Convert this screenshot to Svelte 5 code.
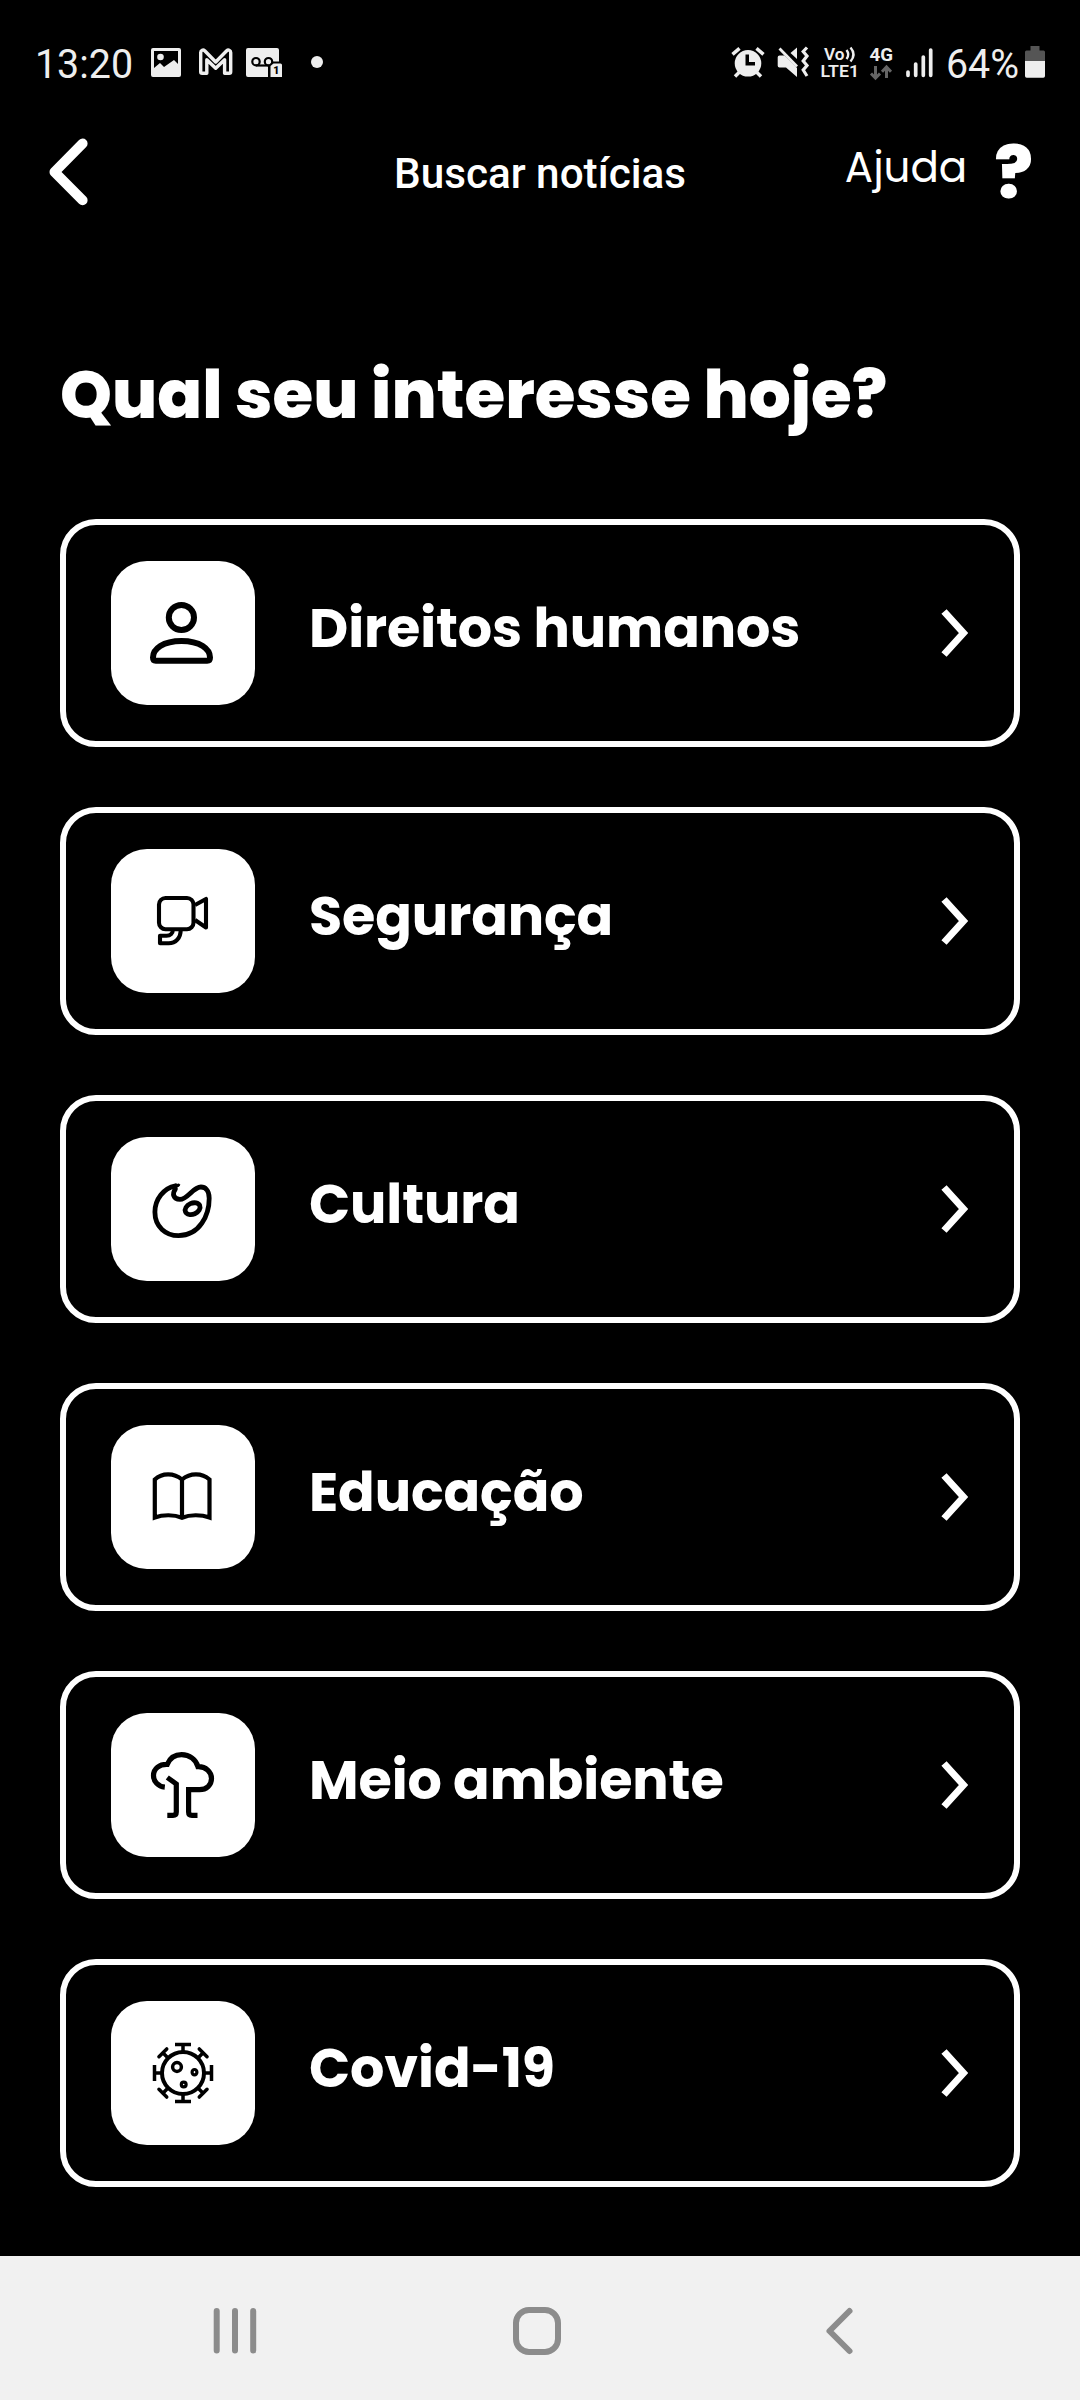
<script>
  const topics = [
    { id: 'person', label: 'Direitos humanos' },
    { id: 'camera', label: 'Segurança' },
    { id: 'palette', label: 'Cultura' },
    { id: 'book', label: 'Educação' },
    { id: 'tree', label: 'Meio ambiente' },
    { id: 'virus', label: 'Covid-19' }
  ];
  const straight = [0, 90, 180, 270];
  const diagonal = [45, 135, 225, 315];
</script>

<div class="screen">
  <header class="status">
    <svg class="clock" width="106" height="56" viewBox="33 34 106 56">
      <text x="35" y="78" font-size="41" textLength="98" lengthAdjust="spacingAndGlyphs">13:20</text>
    </svg>
    <svg class="photo" width="30" height="30" viewBox="151 48 30 30">
      <path fill-rule="evenodd" d="M153 48h26a2 2 0 0 1 2 2v25a2 2 0 0 1-2 2h-26a2 2 0 0 1-2-2V50a2 2 0 0 1 2-2zM154 51v17l6-5 4 4 10-7 4 4V51z" />
      <circle cx="160.5" cy="57" r="3.3" />
    </svg>
    <svg class="mail" width="34" height="28" viewBox="199 48 34 28">
      <path class="line" stroke-width="3.4" stroke-linejoin="round" d="M200.700 52.500v19.200q0 1.500 1.500 1.500h4.600v-13.500l8.900 8.600 8.900-8.600v13.500h4.600q1.500 0 1.500-1.500V52.500c0-2.300-2.400-3.200-4-1.800L215.700 62 204.700 50.700c-1.600-1.400-4-.5-4 1.800z" />
    </svg>
    <svg class="voicemail" width="37" height="30" viewBox="246 48 37 30">
      <path d="M248 48h29a2 2 0 0 1 2 2v11.500h-6.500L268 66v11h-20a2 2 0 0 1-2-2V50a2 2 0 0 1 2-2z" />
      <g fill="none" stroke="#000" stroke-width="2.2">
        <circle cx="256" cy="61.700" r="3.700" />
        <circle cx="268.500" cy="61.700" r="3.700" />
        <path d="M256 65.500h12.500" />
      </g>
      <path d="M273.500 63.500h7a1.500 1.500 0 0 1 1.500 1.500v12h-11.500V66z" />
      <text class="ink" x="273.300" y="74.300" font-size="10.500" font-weight="900">1</text>
    </svg>
    <span class="dot"></span>

    <div class="system">
      <svg width="33" height="31" viewBox="731 47 33 31">
        <path fill-rule="evenodd" d="M748 50a13.300 13.300 0 1 1 0 26.600 13.300 13.300 0 0 1 0-26.600zm-2.500 4.500v11h9.500v-3.500h-6v-7.500z" />
        <path class="line" stroke-width="3.500" d="M732.500 54.300l7-6M763.500 54.300l-7-6M735 76.500l4.500-4.500M761 76.500l-4.500-4.500" />
      </svg>
      <svg class="mute" width="32" height="31" viewBox="777 47 32 31">
        <path d="M779.500 55.500h5l12.500 12.500V77l-11-9.500h-6.500q-1.800 0-1.800-1.800v-8.400q0-1.800 1.800-1.800zM797 47.500V59l-6.500-6z" />
        <path class="line" stroke-width="2.800" d="M779.500 48.500l17.500 18" />
        <path class="line" stroke-width="3.200" d="M807 47.500l-3.800 4 3.800 4.500-3.800 5 3.800 4.500-3.800 4.500 3.800 6" />
      </svg>
      <svg class="volte" width="38" height="31" viewBox="821 47 38 31">
        <text x="824" y="60" font-size="17" font-weight="600" textLength="20.500" lengthAdjust="spacingAndGlyphs">Vo</text>
        <path class="line" stroke-width="2.400" d="M846.500 50q3.500 4.500 0 9M850.500 47.500q6 7 0 14" />
        <text x="820.500" y="77.300" font-size="16.500" font-weight="600" textLength="38.500" lengthAdjust="spacingAndGlyphs">LTE1</text>
      </svg>
      <svg class="data" width="24" height="33" viewBox="869 48 24 33">
        <text x="869.500" y="61" font-size="18.500" font-weight="700" textLength="23.500" lengthAdjust="spacingAndGlyphs">4G</text>
        <path class="dim" d="M875.500 66v12M871 73.500l4.500 4.700 4.500-4.700M886.500 78V67M882 71.700l4.500-4.700 4.500 4.700" />
      </svg>
      <svg class="signal" width="28" height="30" viewBox="905 48 28 30">
        <path class="line" stroke-width="3.700" stroke-linecap="round" d="M908 72v3.300M915.700 64v11.300M923.300 57v18.300M930.700 50v25.300" />
      </svg>
      <svg class="charge" width="74" height="56" viewBox="946 34 74 56">
        <text x="946" y="78" font-size="41" textLength="73" lengthAdjust="spacingAndGlyphs">64%</text>
      </svg>
      <svg class="battery" width="20" height="32" viewBox="1025 46 20 32">
        <path fill="#555" d="M1030.500 46h9v4.500h4q1.500 0 1.500 1.500v9h-20v-9q0-1.500 1.500-1.500h4z" />
        <path d="M1025 61h20v15q0 1.700-1.700 1.700h-16.600q-1.700 0-1.700-1.700z" />
      </svg>
    </div>
  </header>

  <nav class="bar">
    <svg class="back" width="42" height="70" viewBox="47 137 42 70">
      <path d="M82.600 143.500L54.500 172l28.100 28.300" />
    </svg>
    <svg class="title" width="296" height="60" viewBox="392 144 296 60">
      <text x="393" y="188" font-size="42" font-weight="500" textLength="292" lengthAdjust="spacingAndGlyphs">Buscar notícias</text>
    </svg>
    <div class="help">
      <span>Ajuda</span>
      <b>?</b>
    </div>
  </nav>

  <main>
    <h1>Qual seu interesse hoje?</h1>

    <div class="list">
      {#each topics as topic (topic.id)}
        <button class="card">
          <span class="tile">
            <svg width="144" height="144" viewBox="0 0 144 144">
              {#if topic.id === 'person'}
                <g stroke-width="6">
                  <circle cx="70.400" cy="56.500" r="12.600" />
                  <path d="M42 96.500C42 88 52 80 70.500 80S99 88 99 96.500q0 3.200-2.800 3.200H44.800q-2.800 0-2.800-3.200z" />
                </g>
              {:else if topic.id === 'camera'}
                <g stroke-width="4.100" stroke-linejoin="round">
                  <rect x="48" y="49" width="34.500" height="31.200" rx="6.500" />
                  <path d="M84 56l11-6v28.500L84 71" />
                  <path d="M69.700 81c0 8-5 13.300-12 13.300H49V86.800h6.500c4 0 6.300-2.500 6.300-5.800" />
                </g>
              {:else if topic.id === 'palette'}
                <g stroke-width="4.800" stroke-linecap="round">
                  <path d="M64.500 48.800C52.700 51 43.900 62.300 43.900 75c0 15 11 23.600 23.600 23.600 21.400 0 30.700-20.700 30.700-37.400 0-8.300-4.300-11.200-8.300-11.200-7.900 0-13.100 12.300-21 12.300-6.600 0-8-5.600-4.500-10.200" />
                  <path stroke-width="3" d="M63.500 50.500l4-2.500" />
                  <ellipse cx="81.600" cy="71.700" rx="7.800" ry="5.500" transform="rotate(-24 81.600 71.700)" />
                </g>
              {:else if topic.id === 'book'}
                <path stroke-width="4.200" d="M71 54.500C63 47.700 51 47.700 43.800 54.500V92.500C52 89.500 63 89.500 71 92.700 79 89.500 90 89.500 98.500 92.500V54.500C91 47.700 79 47.700 71 54.500V93" />
              {:else if topic.id === 'tree'}
                <g stroke-width="5.200">
                  <path d="M53.800 74.200C47 73.500 42.500 68.500 42.500 62.500 42.500 55.500 48.500 51 56.300 51.300 59 45 64.500 41.700 70.600 41.700c8 0 14.400 4.800 16.400 12C95 53.500 100.500 59 100.500 65.500S95.500 76.700 88.500 76.700H77.600V99q0 3.300 3.300 3.300H86.500" />
                  <path d="M56.300 64.500L65.300 71V99q0 3.300-3.300 3.300H56.300" />
                </g>
              {:else}
                <circle cx="72" cy="72" r="21" stroke-width="4" />
                {#each straight as angle}
                  <path stroke-width="3.500" transform="rotate({angle} 72 72)" d="M72 50.500V43.500M64 43.500H80" />
                {/each}
                {#each diagonal as angle}
                  <path stroke-width="3.500" stroke-linecap="round" transform="rotate({angle} 72 72)" d="M72 50.500V43.500M66.500 43.500H77.500" />
                {/each}
                <circle cx="66" cy="66" r="4.400" stroke-width="3.500" />
                <ellipse cx="83.500" cy="71.200" rx="2.400" ry="2.700" stroke-width="3.200" />
                <circle cx="72.700" cy="83.500" r="2.400" stroke-width="3.200" />
              {/if}
            </svg>
          </span>
          <span class="label">{topic.label}</span>
          <svg class="chevron" width="28" height="48" viewBox="0 0 28 48">
            <path d="M3 2.500L22.500 24 3 45.500" />
          </svg>
        </button>
      {/each}
    </div>
  </main>

  <footer>
    <svg width="44" height="48" viewBox="213 2307 44 48">
      <path d="M216.700 2311v39.500M235 2311v39.500M253.200 2311v39.500" />
    </svg>
    <svg class="home" width="48" height="48" viewBox="0 0 48 48">
      <rect x="3" y="3" width="42" height="42" rx="13" />
    </svg>
    <svg width="28" height="48" viewBox="826 2307 28 48">
      <path d="M849.500 2311L829.500 2331l20 20" />
    </svg>
  </footer>
</div>

<style>
  :global(body) {
    margin: 0;
    background: #000;
  }
  .screen {
    width: 1080px;
    height: 2400px;
    display: flex;
    flex-direction: column;
    overflow: hidden;
    background: #000;
    color: #fff;
    font-family: Roboto, sans-serif;
  }
  svg {
    display: block;
    flex: none;
    overflow: visible;
    fill: currentColor;
  }
  .status {
    box-sizing: border-box;
    height: 124px;
    padding: 0 35px 0 33px;
    display: flex;
    align-items: center;
    color: #eee;
  }
  .status .line {
    fill: none;
    stroke: #eee;
  }
  .status .ink {
    fill: #000;
  }
  .status .dim {
    fill: none;
    stroke: #666;
    stroke-width: 3;
  }
  .photo {
    margin: 2px 0 0 12px;
  }
  .mail {
    margin-left: 18px;
  }
  .voicemail {
    margin: 2px 0 0 13px;
  }
  .dot {
    width: 12px;
    height: 12px;
    margin-left: 28px;
    border-radius: 50%;
    background: #eee;
  }
  .system {
    margin-left: auto;
    display: flex;
    align-items: center;
  }
  .mute {
    margin-left: 13px;
  }
  .volte {
    margin-left: 12px;
  }
  .data {
    margin: 5px 0 0 10px;
  }
  .signal {
    margin: 2px 0 0 12px;
  }
  .charge {
    margin-left: 13px;
  }
  .battery {
    margin-left: 5px;
  }
  .bar {
    height: 96px;
    padding: 0 47px;
    display: flex;
    align-items: center;
  }
  .back path {
    fill: none;
    stroke: #fff;
    stroke-width: 10;
    stroke-linecap: round;
    stroke-linejoin: round;
  }
  .title {
    margin: 4px 0 0 304px;
  }
  .help {
    margin-left: auto;
    padding-top: 2px;
    display: flex;
    align-items: baseline;
    font-family: Poppins, Inter, sans-serif;
    line-height: 1.4;
  }
  .help span {
    position: relative;
    top: -16px;
    font-size: 42px;
  }
  .help b {
    margin-left: 27px;
    font-size: 72px;
    font-weight: 800;
  }
  main {
    flex: 1;
    padding: 130px 60px 0;
  }
  h1 {
    margin: 0;
    font: 800 66px/90px Poppins, Inter, sans-serif;
    white-space: nowrap;
  }
  .list {
    margin-top: 79px;
    display: flex;
    flex-direction: column;
    gap: 60px;
  }
  .card {
    box-sizing: border-box;
    height: 228px;
    padding: 0 45px;
    display: flex;
    align-items: center;
    border: 6px solid #fff;
    border-radius: 36px;
    background: #000;
    color: #fff;
  }
  .tile {
    border-radius: 36px;
    background: #fff;
  }
  .tile svg {
    fill: none;
    stroke: #000;
  }
  .label {
    margin-left: 54px;
    padding-bottom: 10px;
    font: 700 54px/81px Poppins, Inter, sans-serif;
    letter-spacing: -0.1px;
    white-space: nowrap;
  }
  .chevron {
    margin-left: auto;
  }
  .chevron path {
    fill: none;
    stroke: #fff;
    stroke-width: 7;
  }
  footer {
    box-sizing: border-box;
    height: 144px;
    padding: 6px 226px 0 213px;
    display: flex;
    align-items: center;
    background: #f1f1f1;
  }
  footer svg {
    fill: none;
    stroke: #8c8c8c;
    stroke-width: 6;
    stroke-linecap: round;
    stroke-linejoin: round;
  }
  .home {
    margin: 0 auto 0 256px;
  }
</style>
